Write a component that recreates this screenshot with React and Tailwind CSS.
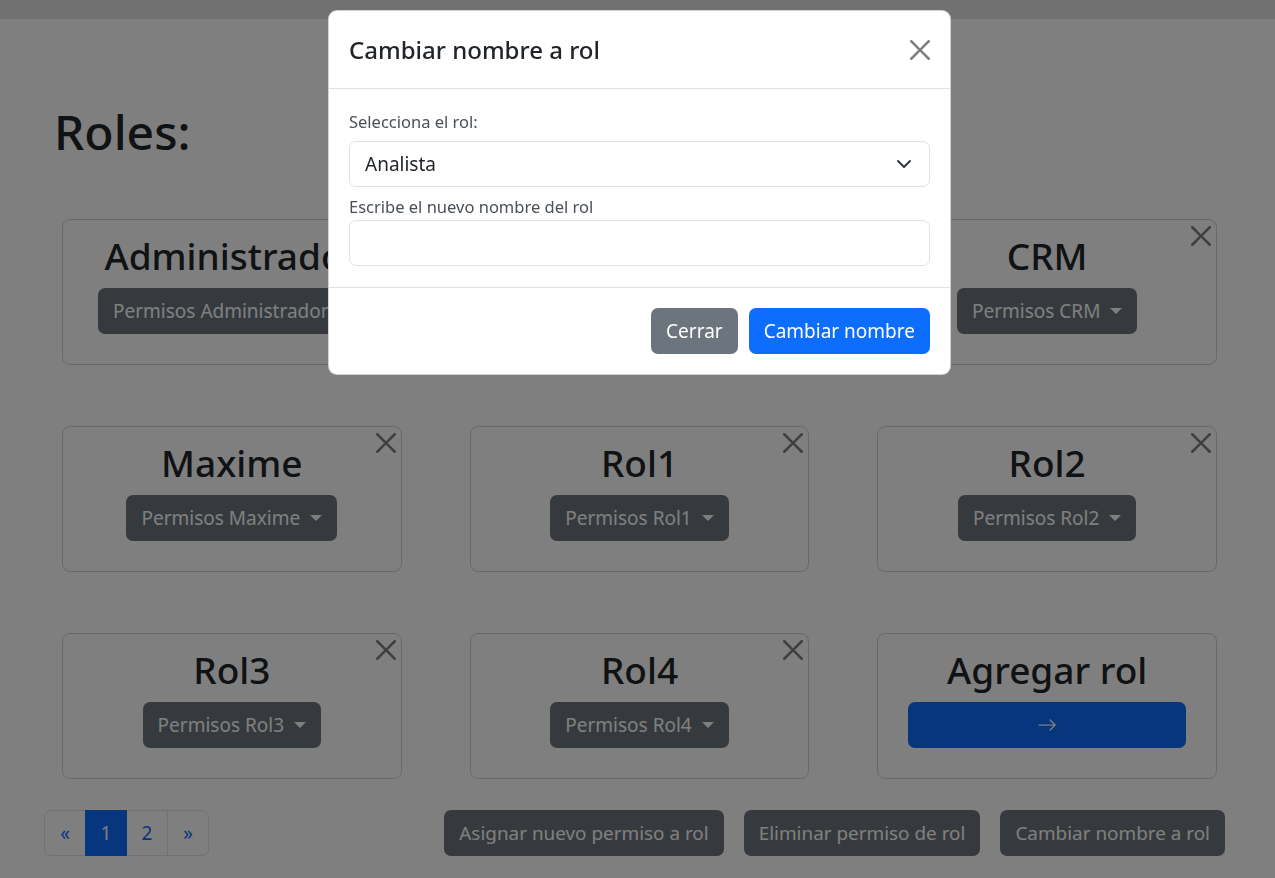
import React from 'react';

const CloseIcon = ({ className }) => (
  <svg viewBox="0 0 16 16" className={className} fill="currentColor" aria-hidden="true">
    <path d="M.293.293a1 1 0 0 1 1.414 0L8 6.586 14.293.293a1 1 0 1 1 1.414 1.414L9.414 8l6.293 6.293a1 1 0 0 1-1.414 1.414L8 9.414l-6.293 6.293a1 1 0 0 1-1.414-1.414L6.586 8 .293 1.707a1 1 0 0 1 0-1.414z" />
  </svg>
);

const ArrowRight = ({ className }) => (
  <svg viewBox="0 0 16 16" className={className} fill="currentColor" aria-hidden="true">
    <path
      fillRule="evenodd"
      d="M1 8a.5.5 0 0 1 .5-.5h11.793l-3.147-3.146a.5.5 0 0 1 .708-.708l4 4a.5.5 0 0 1 0 .708l-4 4a.5.5 0 0 1-.708-.708L13.293 8.5H1.5A.5.5 0 0 1 1 8z"
    />
  </svg>
);

// second card of the first row sits fully behind the modal
const roles = ['Administrador', null, 'CRM', 'Maxime', 'Rol1', 'Rol2', 'Rol3', 'Rol4'];

const RoleCard = ({ name }) => (
  <div className="relative h-[146px] rounded-[8px] border border-black/[0.175] pt-[14px] text-center">
    <button className="absolute right-[5px] top-[6px] text-black/50">
      <CloseIcon className="h-5 w-5" />
    </button>
    {name && (
      <>
        <h2 className="text-[37px] font-medium leading-[44px] text-[#212529]">{name}</h2>
        <div className="mt-[10px] flex justify-center">
          <button className="flex h-[46px] items-center rounded-[7px] bg-[#6c757d] px-[15px] text-[19px] text-white">
            Permisos {name}
            <span className="ml-[10px] h-0 w-0 border-x-[6px] border-t-[6px] border-x-transparent border-t-white" />
          </button>
        </div>
      </>
    )}
  </div>
);

const AddCard = () => (
  <div className="h-[146px] rounded-[8px] border border-black/[0.175] pt-[14px] text-center">
    <h2 className="text-[37px] font-medium leading-[44px] text-[#212529]">Agregar rol</h2>
    <div className="mt-[10px] flex justify-center">
      <button className="flex h-[46px] w-[278px] items-center justify-center rounded-[7px] bg-[#0d6efd] text-white">
        <ArrowRight className="h-5 w-5" />
      </button>
    </div>
  </div>
);

const pages = ['«', '1', '2', '»'];

export default function App() {
  return (
    <div className="relative min-h-[878px] bg-white font-['Noto_Sans',sans-serif] text-[#212529]">
      <div className="h-[19px] bg-[#e2e3e5]" />

      <h1 className="ml-[54px] mt-[84px] text-[48px] font-medium leading-[57px]">Roles:</h1>

      <div className="ml-[62px] mt-[59px] grid w-[1155px] grid-cols-3 gap-x-[68px] gap-y-[61px]">
        {roles.map((r, i) => (
          <RoleCard key={i} name={r} />
        ))}
        <AddCard />
      </div>

      <div className="mt-[31px] flex items-center justify-between pl-[44px] pr-[50px]">
        <div className="flex">
          {pages.map((p, i) => (
            <span
              key={p}
              className={
                i === 1
                  ? 'relative z-10 -ml-px flex h-[46px] w-[42px] items-center justify-center border border-[#0d6efd] bg-[#0d6efd] text-[19px] text-white'
                  : 'relative -ml-px flex h-[46px] w-[42px] items-center justify-center border border-[#dee2e6] text-[19px] text-[#0d6efd] first:ml-0 first:rounded-l-[7px] last:rounded-r-[7px]'
              }
            >
              {p}
            </span>
          ))}
        </div>
        <div className="flex gap-[20px]">
          {['Asignar nuevo permiso a rol', 'Eliminar permiso de rol', 'Cambiar nombre a rol'].map((t) => (
            <button key={t} className="h-[46px] rounded-[7px] bg-[#6c757d] px-[15px] text-[18.9px] text-white">
              {t}
            </button>
          ))}
        </div>
      </div>

      {/* backdrop + modal */}
      <div className="fixed inset-0 z-40 bg-black/50" />
      <div className="absolute left-[328px] top-[10px] z-50 w-[623px] rounded-[9px] border border-black/[0.175] bg-white">
        <div className="flex h-[78px] items-center justify-between border-b border-[#dee2e6] px-[20px]">
          <h5 className="text-[24px] font-medium leading-[37px] text-[#212529]">Cambiar nombre a rol</h5>
          <button className="text-black/50">
            <CloseIcon className="h-5 w-5" />
          </button>
        </div>
        <div className="px-[20px] pb-[21px] pt-[20px]">
          <label className="block text-[16.5px] leading-[26px] text-[#495057]">Selecciona el rol:</label>
          <div className="mt-[6px] flex h-[46px] items-center justify-between rounded-[7px] border border-[#dee2e6] pl-[15px] pr-[17px] text-[19px]">
            <span>Analista</span>
            <svg viewBox="0 0 16 16" className="h-4 w-4" fill="none" stroke="#343a40" strokeWidth="2" strokeLinecap="round" strokeLinejoin="round">
              <path d="m2 5 6 6 6-6" />
            </svg>
          </div>
          <label className="mt-[7px] block text-[16.5px] leading-[26px] text-[#495057]">Escribe el nuevo nombre del rol</label>
          <div className="h-[46px] rounded-[7px] border border-[#dee2e6]" />
        </div>
        <div className="flex justify-end gap-[11px] border-t border-[#dee2e6] px-[20px] py-[20px]">
          <button className="h-[46px] rounded-[7px] bg-[#6c757d] px-[15px] text-[19px] text-white">Cerrar</button>
          <button className="h-[46px] rounded-[7px] bg-[#0d6efd] px-[15px] text-[19px] text-white">Cambiar nombre</button>
        </div>
      </div>
    </div>
  );
}
